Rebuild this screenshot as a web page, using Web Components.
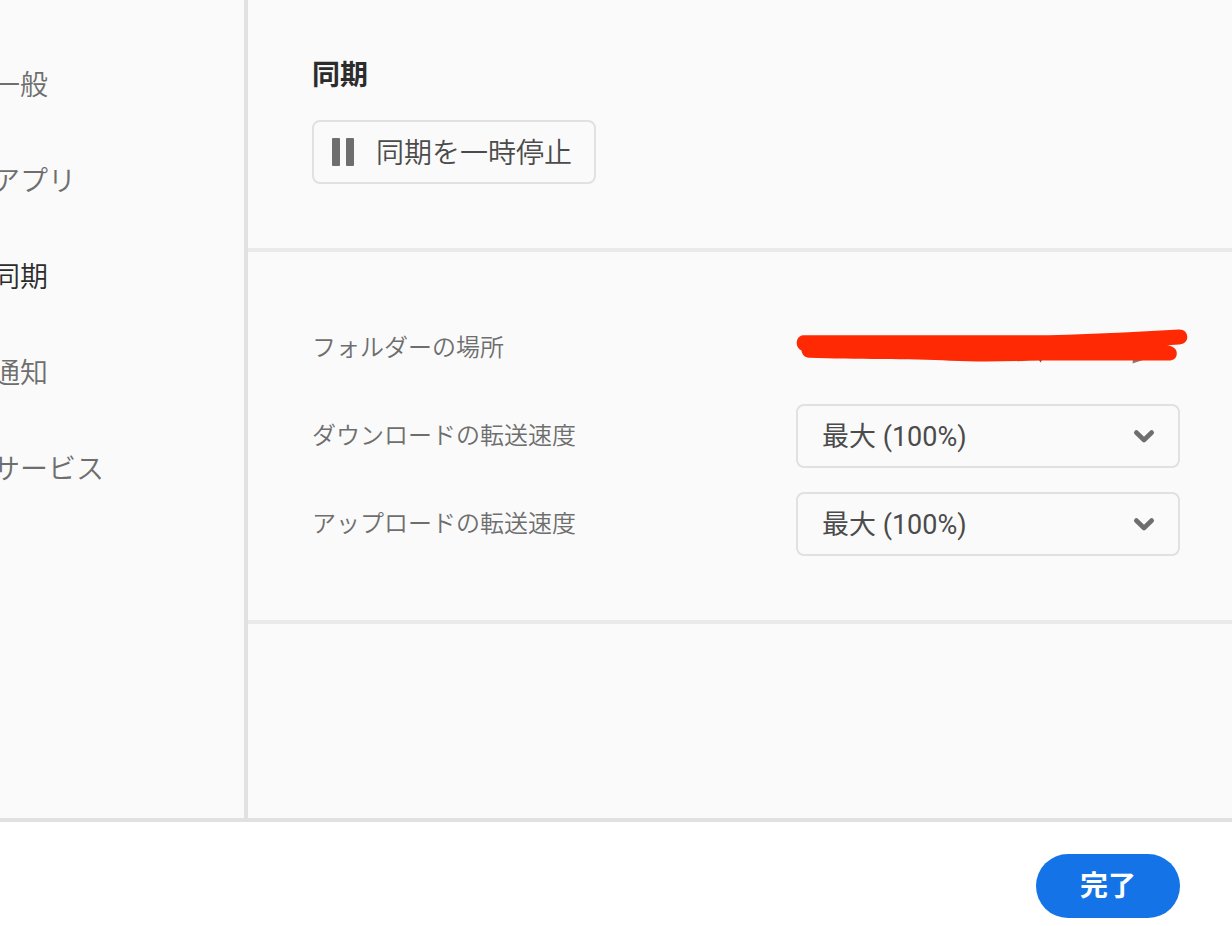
<!DOCTYPE html>
<html lang="ja">
<head>
<meta charset="utf-8">
<meta name="viewport" content="width=device-width, initial-scale=1">
<title>同期</title>
<style>
  body {
    margin: 0;
    color: #6e6e6e;
    background: #fff;
    font-family: "Noto Sans CJK JP", sans-serif;
    font-size: 28px;
    line-height: 36px;
  }
</style>
</head>
<body>
<preferences-dialog>
  <side-nav slot="nav">
    <nav-item>一般</nav-item>
    <nav-item>アプリ</nav-item>
    <nav-item current>同期</nav-item>
    <nav-item>通知</nav-item>
    <nav-item>サービス</nav-item>
  </side-nav>
  <settings-section heading="同期">
    <pause-button>同期を一時停止</pause-button>
  </settings-section>
  <settings-section>
    <folder-row label="フォルダーの場所"></folder-row>
    <speed-row label="ダウンロードの転送速度" value="最大 (100%)"></speed-row>
    <speed-row label="アップロードの転送速度" value="最大 (100%)"></speed-row>
  </settings-section>
  <done-button slot="actions">完了</done-button>
</preferences-dialog>

<script>
  class BaseElement extends HTMLElement {
    constructor() {
      super();
      this.attachShadow({ mode: "open" });
    }
    connectedCallback() {
      this.shadowRoot.innerHTML = this.render();
    }
  }

  customElements.define("preferences-dialog", class extends BaseElement {
    render() {
      return `<style>
        :host { display: grid; grid-template-rows: 1fr auto; min-height: 100vh; }
        .body { display: flex; background: #fafafa; }
        aside { flex: 0 0 244px; border-right: 4px solid #e1e1e1; }
        main { flex: 1; min-width: 0; }
        footer { display: flex; justify-content: flex-end; padding: 32px 52px 8px; border-top: 4px solid #e1e1e1; background: #fff; }
      </style>
      <div class="body">
        <aside><slot name="nav"></slot></aside>
        <main><slot></slot></main>
      </div>
      <footer><slot name="actions"></slot></footer>`;
    }
  });

  customElements.define("side-nav", class extends BaseElement {
    render() {
      return `<style>
        :host { display: block; }
        nav { display: flex; flex-direction: column; gap: 60px; margin: 65px 0 0 -8px; }
      </style>
      <nav><slot></slot></nav>`;
    }
  });

  customElements.define("nav-item", class extends BaseElement {
    render() {
      const current = this.hasAttribute("current") ? ' aria-current="page"' : "";
      return `<style>
        :host { display: block; }
        a { display: block; color: #6e6e6e; font-weight: 350; text-decoration: none; }
        a[aria-current] { color: #2c2c2c; }
      </style>
      <a href="#"${current}><slot></slot></a>`;
    }
  });

  customElements.define("settings-section", class extends BaseElement {
    render() {
      const heading = this.getAttribute("heading");
      return `<style>
        :host { display: block; border-bottom: 4px solid #eaeaea; }
        section { display: flex; flex-direction: column; gap: 24px; padding: 64px 52px 64px 64px; }
        section.titled { gap: 29px; padding-top: 55px; }
        h2 { margin: 0; font-size: 28px; line-height: 36px; font-weight: 700; color: #2c2c2c; }
      </style>
      <section class="${heading ? "titled" : ""}">
        ${heading ? `<h2>${heading}</h2>` : ""}
        <slot></slot>
      </section>`;
    }
  });

  customElements.define("pause-button", class extends BaseElement {
    render() {
      return `<style>
        :host { display: flex; }
        button { display: flex; align-items: center; gap: 20px; height: 64px; padding: 0 22px 0 18px;
          border: 2px solid #e1e1e1; border-radius: 8px; background: #fafafa; color: #4b4b4b; font: inherit; font-weight: 350; }
        svg { display: block; fill: #6e6e6e; }
        span { padding-bottom: 2px; }
      </style>
      <button type="button">
        <svg width="24" height="28" viewBox="0 0 24 28" aria-hidden="true"><rect width="8" height="28" rx="1"/><rect x="14" width="8" height="28" rx="1"/></svg>
        <span><slot></slot></span>
      </button>`;
    }
  });

  const rowStyles = `
    :host { display: grid; grid-template-columns: 1fr 384px; align-items: center; }
    .label { padding-bottom: 4px; font-size: 24px; line-height: 32px; font-weight: 350; color: #6e6e6e; }`;

  customElements.define("folder-row", class extends BaseElement {
    render() {
      return `<style>${rowStyles}
        svg { display: block; width: 384px; height: 64px; overflow: visible; }
      </style>
      <span class="label">${this.getAttribute("label")}</span>
      <svg viewBox="16 6 384 64" aria-hidden="true">
        <path d="M259 50 260.500 52.500 262 50Z" fill="#6e4a48"/>
        <path d="M353 49 352.500 53.500 363 50Z" fill="#8a7876"/>
        <path d="M23 25.300H250C300 25.300 350 22 399 19.500C404 19.300 407.300 22.500 407.300 27C407.300 31.500 404 34.200 399 34.400L387 35.300C393 36 396.800 39 396.800 43.500C396.800 48 393.500 50.500 389 50.500H262C230 51.300 203 52.300 170 50.800C130 48.500 75 49.800 29 47.800C24.500 47.500 22 44.500 21.500 40.500C18.500 39 16.700 36.500 16.700 33C16.700 29 19.500 25.300 23 25.300Z" fill="#ff2a04"/>
      </svg>`;
    }
  });

  customElements.define("speed-row", class extends BaseElement {
    render() {
      return `<style>${rowStyles}
        .field { display: grid; align-items: center; }
        select, svg { grid-area: 1 / 1; }
        select { appearance: none; width: 100%; height: 64px; margin: 0; padding: 2px 60px 0 24px;
          border: 2px solid #e1e1e1; border-radius: 8px; background: #fafafa; color: #4b4b4b;
          font: 400 27px/36px Roboto, "Noto Sans CJK JP", sans-serif; }
        svg { justify-self: end; margin-right: 24px; pointer-events: none;
          fill: none; stroke: #6e6e6e; stroke-width: 4.600; stroke-linecap: round; stroke-linejoin: round; }
      </style>
      <label class="label" for="speed">${this.getAttribute("label")}</label>
      <div class="field">
        <select id="speed"><option>${this.getAttribute("value")}</option></select>
        <svg width="24" height="16" viewBox="0 0 24 16" aria-hidden="true"><path d="M4.300 4.500 12 12 19.700 4.500"/></svg>
      </div>`;
    }
  });

  customElements.define("done-button", class extends BaseElement {
    render() {
      return `<style>
        :host { display: block; }
        button { height: 64px; padding: 0 44px 4px; border: 0; border-radius: 32px; background: #1473e6;
          color: #fff; font: inherit; font-weight: 700; }
      </style>
      <button type="button"><slot></slot></button>`;
    }
  });
</script>
</body>
</html>
